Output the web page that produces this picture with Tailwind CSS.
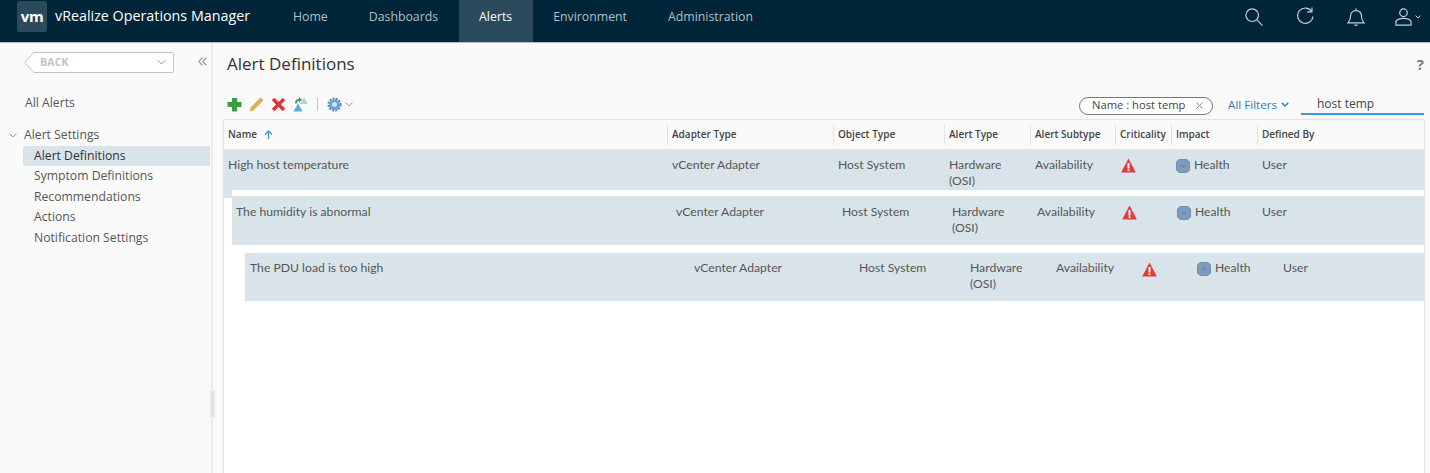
<!DOCTYPE html>
<html lang="en">
<head>
    <meta charset="UTF-8"/>
    <title>vRealize Operations Manager</title>
    <script src="https://cdn.jsdelivr.net/npm/@tailwindcss/browser@4"></script>
</head>
<body class="w-[1430px] h-[473px] overflow-hidden bg-white font-['Open_Sans',sans-serif] text-[#565656]">

<!-- top bar -->
<header class="h-[43px] bg-[#002538] border-b border-[#b8bec2] flex items-stretch text-[12.300px]">
    <div class="ml-[17px] mt-[1px] w-[30px] h-[31px] rounded-[2px] bg-[#2b4a5c] flex items-center justify-center text-white text-[15px] font-bold tracking-[-0.5px]">vm</div>
    <div class="ml-[8px] w-[217.500px] pt-[6px] text-white text-[14.300px] leading-[20px]">vRealize Operations Manager</div>
    <nav class="flex h-full text-[#b4bfc5] font-medium">
        <div class="px-[20.500px] pt-[9px] leading-[16px]">Home</div>
        <div class="px-[20.500px] pt-[9px] leading-[16px]">Dashboards</div>
        <div class="px-[20.500px] pt-[9px] leading-[16px] bg-[#2b4a5c] text-white">Alerts</div>
        <div class="px-[20.500px] pt-[9px] leading-[16px]">Environment</div>
        <div class="px-[20.500px] pt-[9px] leading-[16px]">Administration</div>
    </nav>
    <div class="ml-auto mb-[9px] flex items-center text-[#c5ced3]">
        <svg class="w-[18px] h-[18px]" viewBox="0 0 20 20" fill="none" stroke="currentColor" stroke-width="1.300"><circle cx="8" cy="8" r="7"/><path d="M13 13 19.500 19.500"/></svg>
        <svg class="ml-[33px] w-[18px] h-[19px]" viewBox="0 0 20 20" fill="none" stroke="currentColor" stroke-width="1.300"><path d="M17.500 4.500A8.500 8.500 0 1 0 18.800 10"/><path d="M12.500 4.800h5.200V0"/></svg>
        <svg class="ml-[33px] w-[18px] h-[20px]" viewBox="0 0 20 21" fill="none" stroke="currentColor" stroke-width="1.300"><path d="M1 17c2-2 2.800-3 2.800-6.500C3.800 6.500 6 3.500 10 3.500s6.200 3 6.200 7c0 3.500.8 4.500 2.800 6.500z"/><path d="M10 1v2.500M8.200 19.500h3.600"/></svg>
        <svg class="ml-[30px] w-[17px] h-[18px]" viewBox="0 0 18 19" fill="none" stroke="currentColor" stroke-width="1.300"><circle cx="9" cy="5" r="4"/><path d="M1 18v-3.500c0-2 4-3.500 8-3.500s8 1.500 8 3.500V18z"/></svg>
        <svg class="ml-[3px] mr-[9px] w-[6px] h-[4px]" viewBox="0 0 6 4" fill="none" stroke="currentColor"><path d="M.5.5 3 3 5.500.5"/></svg>
    </div>
</header>

<div class="flex h-[430px]">
    <!-- left nav -->
    <aside class="relative w-[211px] shrink-0 bg-[#fafafa] text-[12.200px]">
        <div class="ml-[24px] mt-[9px] w-[150px] h-[21px] flex items-center">
            <svg class="w-[150px] h-[21px] shrink-0" viewBox="0 0 150 21" fill="none"><path d="M9.500.5H148a1.500 1.500 0 0 1 1.500 1.500v17a1.500 1.500 0 0 1-1.500 1.500H9.500L.8 10.500z" fill="#fff" stroke="#c4c4c4"/><path d="M133.500 8l4 4 4-4" stroke="#9a9a9a"/></svg>
            <span class="ml-[-134px] text-[10.500px] font-bold text-[#c2c2c2] tracking-[0.2px]">BACK</span>
        </div>
        <div class="ml-[25px] mt-[22px] leading-[16px]">All Alerts</div>
        <div class="mt-[16px] flex items-center h-[16px]">
            <svg class="ml-[9px] w-[8px] h-[5px]" viewBox="0 0 8 5" fill="none" stroke="#9a9a9a"><path d="M.5.5 4 4 7.500.5"/></svg>
            <span class="ml-[7px]">Alert Settings</span>
        </div>
        <ul class="mt-[3px] ml-[23px] w-[187px]">
            <li class="h-[20px] pl-[11px] flex items-center bg-[#d9e4ea] rounded-l-[2px] text-[#333]">Alert Definitions</li>
            <li class="h-[20.500px] pl-[11px] flex items-center">Symptom Definitions</li>
            <li class="h-[20.500px] pl-[11px] flex items-center">Recommendations</li>
            <li class="h-[20.500px] pl-[11px] flex items-center">Actions</li>
            <li class="h-[20.500px] pl-[11px] flex items-center">Notification Settings</li>
        </ul>
        <svg class="absolute left-[198px] top-[14px] w-[9px] h-[9px]" viewBox="0 0 9 9" fill="none" stroke="#9a9a9a" stroke-width="1.300"><path d="M4.300.8.800 4.500l3.500 3.700M8.300.8 4.800 4.500l3.500 3.700"/></svg>
        <div class="absolute left-[210px] top-[347px] w-[5px] h-[28px] bg-[#e4e4e4] border border-[#ececec]"></div>
    </aside>
    <div class="w-[2px] shrink-0 bg-[#ececec]"></div>

    <!-- main -->
    <main class="flex-1 min-w-0 bg-[#fafafa] pl-[10px] pr-[6px]">
        <div class="flex items-center h-[41px]">
            <h1 class="ml-[4px] text-[17px] text-[#333]">Alert Definitions</h1>
            <span class="ml-auto mt-[2px] text-[15px] font-bold text-[#777]">?</span>
        </div>
        <div class="flex items-center h-[35px] pt-[6px]">
            <svg class="ml-[4px] w-[15px] h-[15px]" viewBox="0 0 15 15"><path d="M5 1h5v4h4.500v5H10v4.500H5V10H.5V5H5z" fill="#3aa03e"/></svg>
            <svg class="ml-[7px] w-[15px] h-[15px]" viewBox="0 0 15 15"><path d="M11.500.8l2.500 2.500L4.500 13 1 14l1-3.500z" fill="#dcb24e" stroke="#c69a38" stroke-width=".5"/></svg>
            <svg class="ml-[7px] w-[15px] h-[15px]" viewBox="0 0 15 15" fill="none" stroke="#d9363a" stroke-width="3.400"><path d="M2 2l11 11M13 2 2 13"/></svg>
            <svg class="ml-[7px] w-[15px] h-[15px]" viewBox="0 0 15 15"><path d="M5 6.500 9.500 14.500H.5z" fill="#5da9dc"/><path d="M11 .5l3.800 6.500H7.200z" fill="#a9d2ec"/><path d="M2 6.500C2 3.500 3.500 2 6 2V.2L9 2.800 6 5.500V3.800C4.800 3.800 3.800 4.800 3.800 6.500z" fill="#3a9a4a"/></svg>
            <div class="ml-[9px] w-[1px] h-[13px] bg-[#c4c4c4]"></div>
            <svg class="ml-[9px] w-[15px] h-[15px]" viewBox="0 0 15 15"><circle cx="7.500" cy="7.500" r="5.200" fill="#6f9fd8"/><circle cx="7.500" cy="7.500" r="6" fill="none" stroke="#4f86c6" stroke-width="2" stroke-dasharray="2 1.200"/><circle cx="7.500" cy="7.500" r="2.500" fill="#d6e5f5"/></svg>
            <svg class="ml-[3px] w-[8px] h-[5px]" viewBox="0 0 8 5" fill="none" stroke="#9a9a9a"><path d="M.5.5 4 4 7.500.5"/></svg>

            <div class="ml-auto flex items-center">
                <div class="w-[134px] h-[18px] mt-[2px] rounded-full border border-[#777] bg-white flex items-center pl-[12px] text-[11.200px] text-[#444]">
                    Name : host temp
                    <svg class="ml-auto mr-[9px] w-[7px] h-[7px]" viewBox="0 0 7 7" stroke="#888"><path d="M.5.5l6 6M6.500.5l-6 6"/></svg>
                </div>
                <span class="ml-[15px] text-[11.600px] text-[#2a7ec0]">All Filters</span>
                <svg class="ml-[4px] mr-[12px] w-[8px] h-[5px]" viewBox="0 0 8 5" fill="none" stroke="#2a7ec0" stroke-width="1.400"><path d="M.7.7 4 4 7.300.7"/></svg>
                <div class="w-[123px] h-[21px] pl-[16px] flex items-center border-b-2 border-[#3d9ad6] text-[12px] text-[#444]">host temp</div>
            </div>
        </div>

        <!-- table -->
        <section class="h-[354px] w-[1202px] bg-white border border-[#e4e4e4] border-b-0 font-['Lato',sans-serif] text-[12.200px]">
            <div class="h-[30px] grid grid-cols-[443px_166px_111px_86px_85px_56px_86px_1fr] items-center bg-[#fafafa] border-b border-[#e4e4e4] font-['Open_Sans',sans-serif] text-[10px] font-semibold text-[#444]">
                <div class="pl-[4px] flex items-center">Name
                    <svg class="ml-[7px] w-[9px] h-[9px]" viewBox="0 0 9 9" fill="none" stroke="#3d9ad6" stroke-width="1.300"><path d="M4.500 9V1M1 4.500l3.500-3.500L8 4.500"/></svg>
                </div>
                <div class="pl-[4px] h-[21px] flex items-center border-l border-[#e4e4e4]">Adapter Type</div>
                <div class="pl-[4px] h-[21px] flex items-center border-l border-[#e4e4e4]">Object Type</div>
                <div class="pl-[4px] h-[21px] flex items-center border-l border-[#e4e4e4]">Alert Type</div>
                <div class="pl-[4px] h-[21px] flex items-center border-l border-[#e4e4e4]">Alert Subtype</div>
                <div class="pl-[4px] h-[21px] flex items-center border-l border-[#e4e4e4]">Criticality</div>
                <div class="pl-[4px] h-[21px] flex items-center border-l border-[#e4e4e4]">Impact</div>
                <div class="pl-[4px] h-[21px] flex items-center border-l border-[#e4e4e4]">Defined By</div>
            </div>

            <!-- row 1 -->
            <div class="h-[40px] grid grid-cols-[444px_166px_111px_86px_86px_55px_86px_1fr] bg-[#d9e4ea] leading-[16px] pt-[7px]">
                <div class="pl-[4px]">High host temperature</div>
                <div class="pl-[4px]">vCenter Adapter</div>
                <div class="pl-[4px]">Host System</div>
                <div class="pl-[4px]">Hardware<br/>(OSI)</div>
                <div class="pl-[4px]">Availability</div>
                <div class="pl-[4px]"><svg class="mt-[1px] w-[15px] h-[15px]" viewBox="0 0 15 15"><path d="M7.500.5 14.800 14.500H.2z" fill="#e23b3b"/><path d="M6.500 5h2v5.500h-2zM6.500 11.500h2v1.500h-2z" fill="#fff"/></svg></div>
                <div class="pl-[4px] flex items-start"><svg class="w-[14px] h-[14px] mt-[2px]" viewBox="0 0 14 14"><path d="M3 .5h8L13.500 3v8L11 13.500H3L.5 11V3z" fill="#7d9cbc" stroke="#6f8fb0"/><ellipse cx="7" cy="7" rx="2.500" ry="1.800" fill="#6f8fb0"/></svg><span class="ml-[4px]">Health</span></div>
                <div class="pl-[4px]">User</div>
            </div>

            <!-- row 2 -->
            <div class="flex h-[55px]">
                <div class="w-[8px] h-[8px] shrink-0 bg-[#d9e4ea]"></div>
                <div class="flex-1 mt-[6px] h-[49px] grid grid-cols-[444px_166px_110px_85px_85px_55px_85px_1fr] bg-[#d9e4ea] leading-[16px] pt-[8px]">
                    <div class="pl-[4px]">The humidity is abnormal</div>
                    <div>vCenter Adapter</div>
                    <div>Host System</div>
                    <div>Hardware<br/>(OSI)</div>
                    <div>Availability</div>
                    <div><svg class="mt-[1px] w-[15px] h-[15px]" viewBox="0 0 15 15"><path d="M7.500.5 14.800 14.500H.2z" fill="#e23b3b"/><path d="M6.500 5h2v5.500h-2zM6.500 11.500h2v1.500h-2z" fill="#fff"/></svg></div>
                    <div class="flex items-start"><svg class="w-[14px] h-[14px] mt-[2px]" viewBox="0 0 14 14"><path d="M3 .5h8L13.500 3v8L11 13.500H3L.5 11V3z" fill="#7d9cbc" stroke="#6f8fb0"/><ellipse cx="7" cy="7" rx="2.500" ry="1.800" fill="#6f8fb0"/></svg><span class="ml-[4px]">Health</span></div>
                    <div>User</div>
                </div>
            </div>

            <!-- row 3 -->
            <div class="ml-[21px] mt-[8px] h-[48px] grid grid-cols-[449px_165px_111px_86px_86px_55px_86px_1fr] bg-[#d9e4ea] leading-[16px] pt-[7px]">
                <div class="pl-[5px]">The PDU load is too high</div>
                <div>vCenter Adapter</div>
                <div>Host System</div>
                <div>Hardware<br/>(OSI)</div>
                <div>Availability</div>
                <div><svg class="mt-[2px] w-[15px] h-[15px]" viewBox="0 0 15 15"><path d="M7.500.5 14.800 14.500H.2z" fill="#e23b3b"/><path d="M6.500 5h2v5.500h-2zM6.500 11.500h2v1.500h-2z" fill="#fff"/></svg></div>
                <div class="flex items-start"><svg class="w-[14px] h-[14px] mt-[2px]" viewBox="0 0 14 14"><path d="M3 .5h8L13.500 3v8L11 13.500H3L.5 11V3z" fill="#7d9cbc" stroke="#6f8fb0"/><ellipse cx="7" cy="7" rx="2.500" ry="1.800" fill="#6f8fb0"/></svg><span class="ml-[4px]">Health</span></div>
                <div>User</div>
            </div>
        </section>
    </main>
</div>
</body>
</html>
